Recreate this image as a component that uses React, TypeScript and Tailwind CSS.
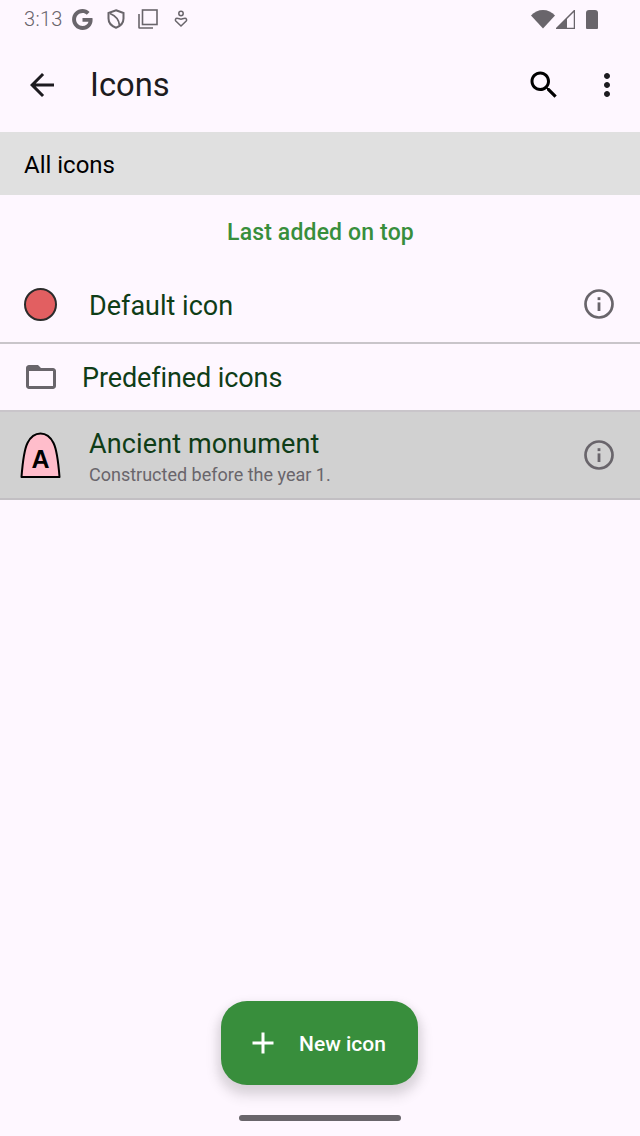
import React from "react";

const font = { fontFamily: "Roboto, sans-serif" };

function InfoIcon({ className = "" }: { className?: string }) {
  return (
    <svg width="32" height="32" viewBox="0 0 32 32" fill="none" className={`shrink-0 ${className}`}>
      <circle cx="16" cy="16" r="13.5" stroke="#69656b" strokeWidth="2.7" />
      <rect x="14.6" y="14.4" width="2.8" height="8.6" fill="#69656b" />
      <rect x="14.6" y="9.2" width="2.8" height="2.9" fill="#69656b" />
    </svg>
  );
}

function StatusBar() {
  return (
    <div className="flex h-[38px] items-center justify-between pl-6 pr-[42px] text-[#69656b]">
      <div className="flex items-center">
        <span className="text-[20px] leading-none font-light tracking-[0.3px]">3:13</span>
        <svg width="25" height="25" viewBox="0 0 24 24" className="ml-[7px]">
          <path
            d="M12 10.5v3.700h5.800c-.6 2.500-2.800 4-5.800 4-3.500 0-6.200-2.800-6.200-6.200S8.500 5.800 12 5.800c1.700 0 3 .6 4.100 1.600l2.700-2.700C17 3 14.700 2 12 2 6.500 2 2 6.500 2 12s4.500 10 10 10c5.800 0 9.700-4.100 9.700-9.800 0-.6-.1-1.200-.2-1.700H12z"
            fill="#69656b"
          />
        </svg>
        <svg width="18" height="20" viewBox="0 0 18 20" fill="none" className="ml-[12px]">
          <path d="M9 1.300 16.500 4v5.500c0 4.300-3 7.600-7.500 9.200-4.500-1.600-7.500-4.900-7.500-9.200V4L9 1.300Z" stroke="#69656b" strokeWidth="2" />
          <path d="M3 4.500C8 6.500 12 10.500 12.500 16.500" stroke="#69656b" strokeWidth="1.800" />
        </svg>
        <svg width="20" height="20" viewBox="0 0 20 20" fill="none" className="ml-[13px]">
          <rect x="4.500" y="1" width="14.500" height="14.500" stroke="#69656b" strokeWidth="1.600" />
          <path d="M1 5v13.500a.5.5 0 0 0 .5.5H15" stroke="#69656b" strokeWidth="1.600" />
        </svg>
        <svg width="14" height="18" viewBox="0 0 14 18" fill="none" className="ml-[16px]">
          <circle cx="7" cy="3.500" r="2.200" stroke="#69656b" strokeWidth="1.500" />
          <path d="M7 16 1.800 11c-1-1.200-.2-2.700 1.200-2.700 1.800 0 2.700.9 4 .9s2.200-.9 4-.9c1.400 0 2.200 1.500 1.200 2.700L7 16Z" stroke="#69656b" strokeWidth="1.500" />
        </svg>
      </div>
      <div className="flex items-center">
        <svg width="24" height="20" viewBox="0 0 24 20">
          <path d="M0 6.500C3 3 7.500 1 12 1s9 2 12 5.500L12 19.500 0 6.500Z" fill="#69656b" />
        </svg>
        <svg width="19" height="19" viewBox="0 0 19 19" fill="none" className="ml-[1px]">
          <path d="M18.500 0.500V18.500H0.500L18.500 0.500Z" stroke="#69656b" strokeWidth="1.500" />
          <path d="M11 8V18.500H0.500L11 8Z" fill="#69656b" />
        </svg>
        <div className="ml-[11px] h-[19px] w-3 rounded-t-[3px] rounded-b-[1px] bg-[#69656b]" />
      </div>
    </div>
  );
}

function AppBar() {
  return (
    <div className="flex h-[94px] items-center pr-[15px] pl-6 text-[#1d1b20]">
      <svg width="36" height="36" viewBox="0 0 24 24" fill="#1d1b20" className="shrink-0">
        <path d="M20 11H7.830l5.590-5.590L12 4l-8 8 8 8 1.410-1.410L7.830 13H20v-2z" />
      </svg>
      <h1 className="ml-[30px] flex-1 text-[32.7px] leading-none font-normal">Icons</h1>
      <svg width="36" height="36" viewBox="0 0 24 24" fill="#000" className="shrink-0">
        <path d="M15.500 14h-.79l-.28-.27C15.410 12.590 16 11.110 16 9.500 16 5.910 13.090 3 9.500 3S3 5.910 3 9.500 5.910 16 9.500 16c1.610 0 3.090-.59 4.230-1.570l.27.28v.79l5 4.990L20.490 19l-4.990-5zm-6 0C7.010 14 5 11.990 5 9.500S7.010 5 9.500 5 14 7.010 14 9.500 11.990 14 9.500 14z" />
      </svg>
      <svg width="36" height="36" viewBox="0 0 24 24" fill="#1d1b20" className="ml-[27px] shrink-0">
        <path d="M12 8c1.100 0 2-.9 2-2s-.9-2-2-2-2 .9-2 2 .9 2 2 2zm0 2c-1.100 0-2 .9-2 2s.9 2 2 2 2-.9 2-2-.9-2-2-2zm0 6c-1.100 0-2 .9-2 2s.9 2 2 2 2-.9 2-2-.9-2-2-2z" />
      </svg>
    </div>
  );
}

export default function App() {
  return (
    <div className="relative h-[1136px] w-[640px] overflow-hidden bg-[#fef7ff]" style={font}>
      <StatusBar />
      <AppBar />

      <div className="flex h-[63px] items-center bg-[#e0e0e0] pt-[2px] pl-6 text-[24px] text-black">All icons</div>

      <p className="flex h-[75px] items-center justify-center pt-[2px] pl-[1px] text-[23px] font-medium tracking-[0.15px] text-[#388e3c]">
        Last added on top
      </p>

      <div className="flex h-[74px] items-center border-b-2 border-[#c9c5ca] pr-[25px] pl-6">
        <div className="mb-[3px] h-[33px] w-[33px] shrink-0 rounded-full border-2 border-[#2b2b2b] bg-[#e25f61]" />
        <span className="ml-[32px] flex-1 text-[27px] text-[#0f3d17]">Default icon</span>
        <InfoIcon className="mb-[4px]" />
      </div>

      <div className="flex h-[68px] items-center border-b-2 border-[#c9c5ca] pl-[23px]">
        <svg width="36" height="36" viewBox="0 0 24 24" fill="#69656b" className="shrink-0">
          <path d="M20 6h-8l-2-2H4c-1.100 0-2 .9-2 2v12c0 1.100.9 2 2 2h16c1.100 0 2-.9 2-2V8c0-1.100-.9-2-2-2zm0 12H4V8h16v10z" />
        </svg>
        <span className="mt-[2px] ml-[23px] text-[27px] tracking-[-0.1px] text-[#0f3d17]">Predefined icons</span>
      </div>

      <div className="flex h-[88px] items-center border-b-2 border-[#c2bfc3] bg-[#d1d1d1] pr-[25px] pl-5">
        <svg width="42" height="47" viewBox="0 0 42 47" fill="none" className="shrink-0">
          <path
            d="M1.500 45C2.500 32 3.500 19 7.500 11C10.500 5 15 1.500 20.500 1.500C26 1.500 30.500 5 33.500 11C37.500 19 38.500 32 39.500 45Z"
            fill="#ffbdcb"
            stroke="#000"
            strokeWidth="2"
            strokeLinejoin="round"
          />
          <text x="20.500" y="35.500" textAnchor="middle" fontFamily="Liberation Sans" fontWeight="700" fontSize="25" fill="#000">
            A
          </text>
        </svg>
        <div className="ml-[27px] flex-1">
          <div className="text-[27px] leading-[40px] tracking-[0.12px] text-[#0f3d17]">Ancient monument</div>
          <div className="text-[18px] leading-[22px] text-[#69656b]">Constructed before the year 1.</div>
        </div>
        <InfoIcon />
      </div>

      <button
        type="button"
        className="absolute top-[1001px] left-[221px] flex h-[84px] w-[197px] items-center rounded-[26px] bg-[#388e3c] pl-6 text-[21px] font-medium text-white shadow-[0_8px_10px_8px_rgba(0,0,0,0.05),0_6px_8px_2px_rgba(0,0,0,0.1)]"
      >
        <svg width="36" height="36" viewBox="0 0 24 24" fill="#fff" className="shrink-0">
          <path d="M19 13h-6v6h-2v-6H5v-2h6V5h2v6h6v2z" />
        </svg>
        <span className="mt-[4px] ml-[18px]">New icon</span>
      </button>

      <div className="absolute top-[1115px] left-[239px] h-[6px] w-[162px] rounded-full bg-[#69656b]" />
    </div>
  );
}
